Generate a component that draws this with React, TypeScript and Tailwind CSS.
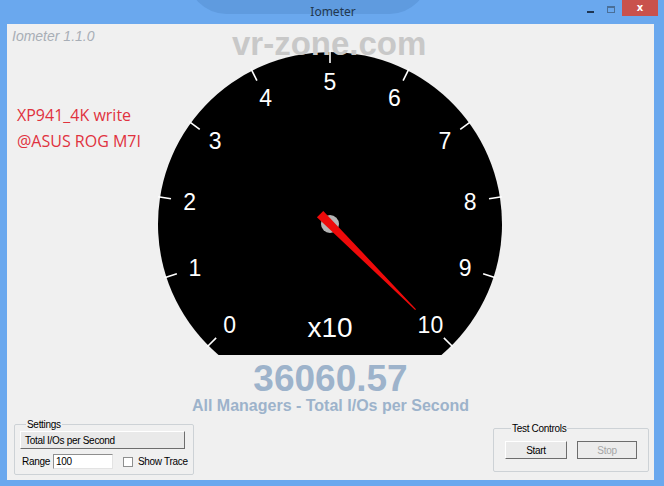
import React from "react";

const CX = 180;
const CY = 174;
const R = 172;

const polar = (r: number, deg: number) => {
  const a = (deg * Math.PI) / 180;
  return { x: CX + r * Math.sin(a), y: CY - r * Math.cos(a) };
};

function Gauge() {
  const chordY = 305;
  const half = Math.sqrt(R * R - (chordY - CY) * (chordY - CY));
  const ticks = Array.from({ length: 11 }, (_, i) => -135 + 27 * i);
  return (
    <svg width="360" height="308" viewBox="0 0 360 308" className="block shrink-0">
      <path
        d={`M ${CX - half} ${chordY} A ${R} ${R} 0 1 1 ${CX + half} ${chordY} Z`}
        fill="#000"
      />
      {ticks.map((deg, i) => {
        const a = polar(161, deg);
        const b = polar(174, deg);
        return (
          <line key={"t" + i} x1={a.x} y1={a.y} x2={b.x} y2={b.y} stroke="#fff" strokeWidth="1.6" />
        );
      })}
      {ticks.map((deg, i) => {
        const p = polar(142, deg);
        return (
          <text
            key={"l" + i}
            x={p.x}
            y={p.y + 8.2}
            fill="#fff"
            fontSize="23"
            textAnchor="middle"
            fontFamily="'Liberation Sans', Arial, sans-serif"
          >
            {i}
          </text>
        );
      })}
      <text
        x={CX}
        y={286.5}
        fill="#fff"
        fontSize="28"
        textAnchor="middle"
        fontFamily="'Liberation Sans', Arial, sans-serif"
      >
        x10
      </text>
      <circle cx={CX} cy={CY} r="9" fill="#b4b4b4" />
      <g transform={`translate(${CX} ${CY}) rotate(135)`}>
        <polygon points="-4.5,14 4.5,14 0.6,-121 -0.6,-121" fill="#ee0a0a" />
      </g>
    </svg>
  );
}

function Fieldset({ title, className, children }: { title: string; className: string; children: React.ReactNode }) {
  return (
    <fieldset className={"border border-[#cdd2d6] rounded-[2px] " + className}>
      <legend className="ml-[6px] px-[1px] leading-[13px]">{title}</legend>
      {children}
    </fieldset>
  );
}

export default function App() {
  return (
    <div className="w-[664px] h-[486px] bg-[#6aa8ee] flex flex-col relative overflow-hidden">
      {/* title bar */}
      <div className="h-[24px] relative flex items-center justify-center shrink-0">
        <div className="absolute left-[188px] top-[-62px] w-[240px] h-[76px] rounded-full bg-[#5f9bdf]" />
        <span className="relative font-['Noto_Sans',sans-serif] text-[12px] text-[#22384f] ml-[2px]">Iometer</span>
        <div className="absolute right-[6px] top-0 h-[16px] w-[36px] bg-[#c9514c] flex items-center justify-center text-white text-[10px] font-bold font-['DejaVu_Sans',sans-serif] leading-none">
          x
        </div>
        <div className="absolute left-[607px] top-[6px] w-[8px] h-[7px] border border-[#4a6f98] border-t-2" />
        <div className="absolute left-[587px] top-[11px] w-[7px] h-[2px] bg-[#1e3552]" />
      </div>

      {/* client area */}
      <div className="ml-[7px] w-[647px] h-[456px] bg-[#f0f0f0] relative flex flex-col">
        <div className="ml-[5px] mt-[5px] leading-[14px] text-[14px] italic text-[#a8aeb6] font-['Liberation_Sans',Arial,sans-serif]">
          Iometer 1.1.0
        </div>
        <div className="absolute left-[225px] top-[3px] text-[33px] leading-none font-bold text-[#c8c8c8] font-['Liberation_Sans',Arial,sans-serif] z-10">
          vr-zone.com
        </div>

        <div className="mt-[7px] flex h-[308px]">
          <div className="w-[143px] shrink-0 pl-[10px] pt-[52px] font-['Open_Sans',sans-serif] text-[16px] leading-[26px] text-[#e0323e] whitespace-nowrap">
            <div>XP941_4K write</div>
            <div>@ASUS ROG M7I</div>
          </div>
          <Gauge />
        </div>

        <div className="mt-[2px] text-center font-['Liberation_Sans',Arial,sans-serif] font-bold text-[#9db3cb]">
          <div className="text-[37px] leading-none">36060.57</div>
          <div className="text-[16px] leading-none mt-[1px]">All Managers - Total I/Os per Second</div>
        </div>

        <div className="mt-[4px] flex items-start justify-between pl-[7px] pr-[5px] font-['Liberation_Sans',Arial,sans-serif] text-[10px] tracking-[-0.3px] text-black whitespace-nowrap">
          <Fieldset title="Settings" className="w-[178px] h-[57px] px-[5px] pb-[5px]">
            <div className="h-[18px] w-[165px] bg-[#e9e9e9] border border-t-white border-l-white border-r-[#6d6d6d] border-b-[#6d6d6d] flex items-center pl-[4px]">
              Total I/Os per Second
            </div>
            <div className="mt-[5px] flex items-center h-[15px]">
              <span className="ml-[2px] shrink-0">Range</span>
              <div className="ml-[3px] w-[60px] h-[15px] shrink-0 bg-white border border-[#8f8f8f] border-b-[#e3e3e3] border-r-[#e3e3e3] flex items-center pl-[2px]">
                100
              </div>
              <div className="ml-[10px] w-[10px] h-[10px] shrink-0 bg-white border border-[#8e8f8f]" />
              <span className="ml-[5px] shrink-0">Show Trace</span>
            </div>
          </Fieldset>
          <Fieldset title="Test Controls" className="mt-[4px] w-[156px] h-[50px] px-[11px]">
            <div className="mt-[6px] flex gap-[10px]">
              <div className="w-[62px] h-[18px] bg-[#eaeaea] border border-t-white border-l-white border-r-[#6d6d6d] border-b-[#6d6d6d] flex items-center justify-center">
                Start
              </div>
              <div className="w-[60px] h-[18px] bg-[#ececec] border border-[#6d6d6d] flex items-center justify-center text-[#a5a5a5]">
                Stop
              </div>
            </div>
          </Fieldset>
        </div>
      </div>
    </div>
  );
}
